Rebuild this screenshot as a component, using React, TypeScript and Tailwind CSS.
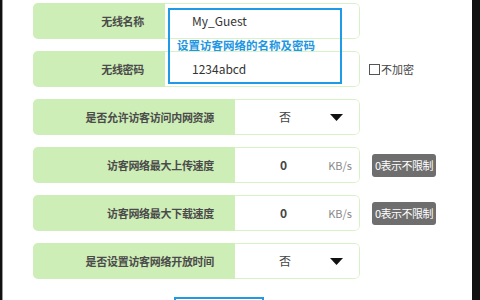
import React from "react";

const font = { fontFamily: '"Noto Sans CJK SC", "Noto Sans", sans-serif' };

function Row({
  label,
  labelW,
  children,
  extra,
}: {
  label: string;
  labelW: string;
  children?: React.ReactNode;
  extra?: React.ReactNode;
}) {
  return (
    <div className="flex items-center h-[36px]">
      <div className="flex w-[327px] h-[36px] rounded-[5px] overflow-hidden">
        <div
          className={`${labelW} h-full bg-[#cdeeb6] flex items-center justify-end pr-[21px] text-[11px] font-semibold text-[#4b4b4b] tracking-[-0.3px]`}
        >
          {label}
        </div>
        <div className="flex-1 h-full bg-white border border-l-0 border-[#d8f2c8] rounded-r-[5px] flex items-center relative">
          {children}
        </div>
      </div>
      {extra}
    </div>
  );
}

function Badge() {
  return (
    <div className="ml-[12px] h-[23px] px-[3px] rounded-[3px] bg-[#6e6e6e] text-white text-[11px] flex items-center tracking-[-0.5px]">
      0表示不限制
    </div>
  );
}

function Tri() {
  return (
    <svg width="13" height="7" viewBox="0 0 13 7" className="absolute left-[95px] top-[14px]">
      <polygon points="0,0 13,0 6.5,7" fill="#111" />
    </svg>
  );
}

export default function App() {
  return (
    <div className="w-[480px] h-[300px] flex overflow-hidden bg-white" style={font}>
      <div className="w-[2px] h-full bg-[#111]" />
      <div className="w-[1px] h-full bg-[#9a9a9a]" />
      <div className="flex-1 h-full relative pl-[30px] pt-[3px] flex flex-col gap-[12px]">
        <Row label="无线名称" labelW="w-[132px]">
          <span className="ml-[27px] text-[12px] text-[#333]">My_Guest</span>
        </Row>
        <Row
          label="无线密码"
          labelW="w-[132px]"
          extra={
            <div className="ml-[9px] flex items-center text-[11px] text-[#444]">
              <span className="w-[11px] h-[11px] border border-[#555] mr-[1px] bg-white" />
              不加密
            </div>
          }
        >
          <span className="ml-[27px] text-[12px] text-[#333]">1234abcd</span>
        </Row>
        <Row label="是否允许访客访问内网资源" labelW="w-[202px]">
          <span className="ml-[44px] text-[12px] text-[#444]">否</span>
          <Tri />
        </Row>
        <Row label="访客网络最大上传速度" labelW="w-[202px]" extra={<Badge />}>
          <span className="ml-[45px] text-[12px] font-semibold text-[#444]">0</span>
          <span className="ml-auto mr-[7px] text-[11px] text-[#888]">KB/s</span>
        </Row>
        <Row label="访客网络最大下载速度" labelW="w-[202px]" extra={<Badge />}>
          <span className="ml-[45px] text-[12px] font-semibold text-[#444]">0</span>
          <span className="ml-auto mr-[7px] text-[11px] text-[#888]">KB/s</span>
        </Row>
        <Row label="是否设置访客网络开放时间" labelW="w-[202px]">
          <span className="ml-[44px] text-[12px] text-[#444]">否</span>
          <Tri />
        </Row>
        <div className="mt-[6px] ml-[141px] w-[90px] h-[30px] shrink-0 border-2 border-[#1e9ae6]" />

        <div className="absolute left-[165px] top-[8px] w-[174px] h-[76px] border-2 border-[#1e9ae6]">
          <div className="absolute left-[7px] top-[27px] text-[11.5px] font-bold text-[#1e96e2] whitespace-nowrap">
            设置访客网络的名称及密码
          </div>
        </div>
      </div>
      <div className="w-[8px] h-full bg-[#111]" />
    </div>
  );
}
